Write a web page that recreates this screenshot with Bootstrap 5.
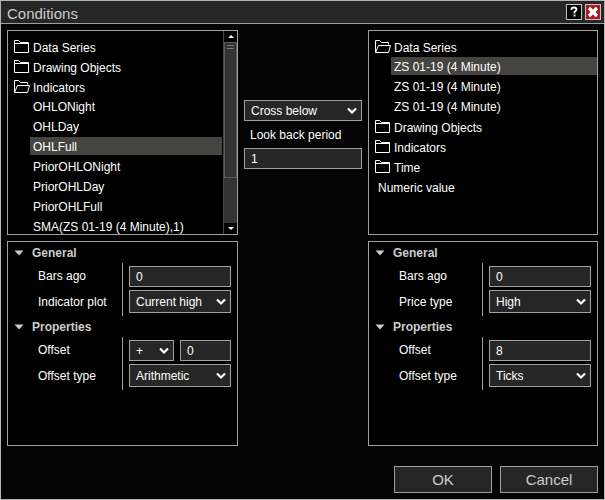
<!DOCTYPE html>
<html lang="en" data-bs-theme="dark">
<head>
<meta charset="utf-8">
<meta name="viewport" content="width=device-width, initial-scale=1">
<title>Conditions</title>
<link href="https://cdn.jsdelivr.net/npm/bootstrap@5.3.0/dist/css/bootstrap.min.css" rel="stylesheet">
<style>
:root { --edge: #a0a0a0; --field: #262626; }
body { font-family: "Liberation Sans", Arial, sans-serif; font-size: 12px; line-height: 20px; color: #fff; background: #030303; }
button { font: inherit; color: inherit; }
.dialog-window { border: 1px solid #b4b6b6; }
.title-bar { height: 23px; padding: 0 3px 0 6px; background: var(--field); border-bottom: 1px solid var(--edge); }
.title-text { font-size: 15px; line-height: 22px; color: #ccc; }
.title-actions { gap: 3px; }
.title-btn { width: 16px; height: 16px; padding: 0; border: 1px solid #c4c4c4; background: #000; }
.title-btn svg { display: block; }
.title-close { background: #a81c24; }
.main-grid { display: grid; grid-template-columns: 231fr 118px 230fr; grid-auto-rows: minmax(205px, 1fr); gap: 6px; padding: 6px 6px 0; }
.pane { border: 1px solid var(--edge); background: #000; min-width: 0; }
.tree-pane { height: 205px; }
.middle { padding-top: 70px; }
.middle label { padding: 4px 6px 3px; }

.tree { padding-top: 6px; }
.tree-item { display: flex; align-items: center; width: 100%; height: 20px; padding: 1px 0 0 6px; border: 0; background: none; text-align: left; white-space: nowrap; }
.tree-item svg { width: 16px; height: 15px; margin-right: 3px; flex: none; }
.tree-leaf { padding-left: 9px; }
.tree-children { padding-left: 22px; }
.tree-children .tree-item { height: 18px; margin-bottom: 2px; padding-left: 3px; }
.tree-item.active { background: #454440; }

.scroll-track { width: 14px; background: #030303; border-left: 1px solid #444; margin-left: 1px; }
.scroll-arrow { height: 11px; width: 13px; padding: 0; border: 0; background: #000; display: block; }
.scroll-arrow svg { display: block; margin: auto; }
.scroll-thumb { height: 136px; border: 1px solid #5c5c5c; background: #333; padding: 0 2px; }
.scroll-thumb span { display: block; height: 3px; border-bottom: 1px solid #777; }
.scroll-rest { background: #333; }

.section-head { display: flex; align-items: center; width: 100%; height: 21px; padding: 0 6px; border: 0; background: none; font-weight: bold; color: #ccc; }
.section-head svg { width: 10px; height: 6px; margin-right: 8px; }
.prop-grid { display: grid; grid-template-columns: 1fr 115px; grid-template-rows: 27px 26px; }
.prop-grid label { padding-left: 30px; align-self: start; white-space: nowrap; line-height: 27px; }
.prop-grid label.lower { line-height: 24px; }
.prop-field { padding: 3px 6px 0; border-left: 1px solid var(--edge); }
.prop-field .form-select, .prop-field .form-control { height: 100%; }
.prop-field.first { padding-bottom: 3px; }
.prop-field.last { padding: 0 6px 3px; }
.offset-row { gap: 6px; }
.offset-row .form-select { width: 45px; flex: none; }
.form-select, .form-control { height: 21px; min-height: 0; padding: 0 6px; border: 1px solid var(--edge); border-radius: 0; background-color: var(--field); color: #fff; font-size: 12px; line-height: 18px; }
.form-select { background-image: url("data:image/svg+xml,%3Csvg xmlns='http://www.w3.org/2000/svg' viewBox='0 0 10 8'%3E%3Cpath d='M1 1.5 5 5.5 9 1.5' fill='none' stroke='white' stroke-width='2.2'/%3E%3C/svg%3E"); background-size: 10px 8px; background-position: right 4px center; }
.form-select:focus, .form-control:focus { background-color: var(--field); border-color: #fff; box-shadow: none; }
.actions { gap: 8px; padding: 20px 6px 6px; }
.action-btn { width: 98px; height: 27px; padding: 0; border: 1px solid var(--edge); border-radius: 0; background: var(--field); color: #ccc; font-size: 15px; line-height: 24px; }
</style>
<script src="https://cdn.jsdelivr.net/npm/bootstrap@5.3.0/dist/js/bootstrap.bundle.min.js"></script>
</head>
<body>
<svg class="d-none" aria-hidden="true">
  <symbol id="folder" viewBox="0 0 16 15"><path d="M.5 12.5V.5H4.5L6.5 2.5H14.5V12.5ZM.5 3.5H14.5" fill="none" stroke="#fff"/></symbol>
  <symbol id="folder-open" viewBox="0 0 16 15"><path d="M.5 12.5V.5H4.5L6.5 2.5H13.5V4.5M.5 12.5 3.5 5.5H15.5L13.5 12.5Z" fill="none" stroke="#fff"/></symbol>
  <symbol id="expanded" viewBox="0 0 10 6"><path d="M.5 .5H9.5L5 5.5Z" fill="#ccc"/></symbol>
</svg>
<div class="dialog-window min-vh-100 d-flex flex-column">
  <header class="title-bar d-flex align-items-center justify-content-between">
    <h1 class="title-text fw-normal m-0 pt-1">Conditions</h1>
    <div class="title-actions d-flex">
      <button class="title-btn" type="button" aria-label="Help"><svg width="14" height="14" viewBox="0 0 14 14"><path d="M4.5 5V4Q4.5 2.5 7 2.5T9.5 4.5Q9.5 5.5 7.5 7V8.5M6.5 10.5H8.5" fill="none" stroke="#fff" stroke-width="1.8"/></svg></button>
      <button class="title-btn title-close" type="button" aria-label="Close"><svg width="14" height="14" viewBox="0 0 14 14"><path d="M3 3 11 11M11 3 3 11" stroke="#fff" stroke-width="3.2"/></svg></button>
    </div>
  </header>

  <main class="main-grid flex-grow-1">
    <section class="pane tree-pane d-flex overflow-hidden">
      <div class="tree flex-grow-1 overflow-hidden">
        <button class="tree-item" type="button"><svg><use href="#folder"/></svg>Data Series</button>
        <button class="tree-item" type="button"><svg><use href="#folder"/></svg>Drawing Objects</button>
        <button class="tree-item" type="button"><svg><use href="#folder-open"/></svg>Indicators</button>
        <div class="tree-children">
          <button class="tree-item" type="button">OHLONight</button>
          <button class="tree-item" type="button">OHLDay</button>
          <button class="tree-item active" type="button">OHLFull</button>
          <button class="tree-item" type="button">PriorOHLONight</button>
          <button class="tree-item" type="button">PriorOHLDay</button>
          <button class="tree-item" type="button">PriorOHLFull</button>
          <button class="tree-item" type="button">SMA(ZS 01-19 (4 Minute),1)</button>
        </div>
      </div>
      <div class="scroll-track d-flex flex-column flex-shrink-0">
        <button class="scroll-arrow" type="button" aria-label="Scroll up"><svg width="6" height="3" viewBox="0 0 6 3"><path d="M0 3 3 0 6 3Z" fill="#fff"/></svg></button>
        <div class="scroll-thumb"><span></span><span></span></div>
        <div class="scroll-rest flex-grow-1"></div>
        <button class="scroll-arrow" type="button" aria-label="Scroll down"><svg width="6" height="3" viewBox="0 0 6 3"><path d="M0 0 3 3 6 0Z" fill="#fff"/></svg></button>
      </div>
    </section>

    <section class="middle">
      <select class="form-select" aria-label="Comparison"><option>Cross below</option><option>Cross above</option></select>
      <label class="d-block" for="lookback">Look back period</label>
      <input class="form-control" id="lookback" type="text" value="1">
    </section>

    <section class="pane tree-pane overflow-hidden">
      <div class="tree">
        <button class="tree-item" type="button"><svg><use href="#folder-open"/></svg>Data Series</button>
        <div class="tree-children">
          <button class="tree-item active" type="button">ZS 01-19 (4 Minute)</button>
          <button class="tree-item" type="button">ZS 01-19 (4 Minute)</button>
          <button class="tree-item" type="button">ZS 01-19 (4 Minute)</button>
        </div>
        <button class="tree-item" type="button"><svg><use href="#folder"/></svg>Drawing Objects</button>
        <button class="tree-item" type="button"><svg><use href="#folder"/></svg>Indicators</button>
        <button class="tree-item" type="button"><svg><use href="#folder"/></svg>Time</button>
        <button class="tree-item tree-leaf" type="button">Numeric value</button>
      </div>
    </section>

    <section class="pane">
      <button class="section-head" type="button"><svg><use href="#expanded"/></svg>General</button>
      <div class="prop-grid">
        <label for="l-bars">Bars ago</label>
        <div class="prop-field first"><input class="form-control" id="l-bars" type="text" value="0"></div>
        <label class="lower" for="l-plot">Indicator plot</label>
        <div class="prop-field last"><select class="form-select" id="l-plot"><option>Current high</option></select></div>
      </div>
      <button class="section-head" type="button"><svg><use href="#expanded"/></svg>Properties</button>
      <div class="prop-grid">
        <label for="l-offset">Offset</label>
        <div class="prop-field first offset-row d-flex"><select class="form-select" aria-label="Offset sign"><option>+</option><option>-</option></select><input class="form-control" id="l-offset" type="text" value="0"></div>
        <label class="lower" for="l-type">Offset type</label>
        <div class="prop-field last"><select class="form-select" id="l-type"><option>Arithmetic</option></select></div>
      </div>
    </section>

    <div></div>

    <section class="pane">
      <button class="section-head" type="button"><svg><use href="#expanded"/></svg>General</button>
      <div class="prop-grid">
        <label for="r-bars">Bars ago</label>
        <div class="prop-field first"><input class="form-control" id="r-bars" type="text" value="0"></div>
        <label class="lower" for="r-price">Price type</label>
        <div class="prop-field last"><select class="form-select" id="r-price"><option>High</option></select></div>
      </div>
      <button class="section-head" type="button"><svg><use href="#expanded"/></svg>Properties</button>
      <div class="prop-grid">
        <label for="r-offset">Offset</label>
        <div class="prop-field first"><input class="form-control" id="r-offset" type="text" value="8"></div>
        <label class="lower" for="r-type">Offset type</label>
        <div class="prop-field last"><select class="form-select" id="r-type"><option>Ticks</option></select></div>
      </div>
    </section>
  </main>

  <footer class="actions d-flex justify-content-end">
    <button class="btn action-btn" type="button">OK</button>
    <button class="btn action-btn" type="button">Cancel</button>
  </footer>
</div>
</body>
</html>
